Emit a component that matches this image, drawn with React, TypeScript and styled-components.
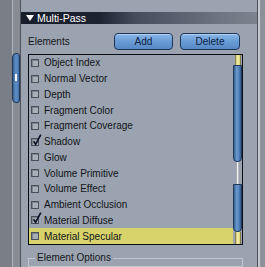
import React from 'react';
import styled, { createGlobalStyle } from 'styled-components';

const GlobalStyle = createGlobalStyle`
  html, body {
    margin: 0;
    padding: 0;
  }
  body {
    width: 265px;
    height: 267px;
    overflow: hidden;
    background: #9ba3b0;
    font-family: "Liberation Sans", Arial, sans-serif;
  }
`;

const Frame = styled.div`
  display: flex;
  width: 265px;
  height: 267px;
  overflow: hidden;
`;

const SideStrip = styled.div`
  position: relative;
  display: flex;
  flex: 0 0 auto;
  border-right: 1px solid #4f535b;
`;

const EdgeStrip = styled.div`
  display: flex;
  flex: 0 0 auto;
  border-left: 1px solid #4b4f57;
`;

const Face = styled.div<{ $w: number; $c: string }>`
  width: ${p => p.$w}px;
  background: ${p => p.$c};
`;

const TabHandle = styled.div`
  position: absolute;
  left: 12px;
  top: 53px;
  width: 8px;
  height: 50px;
  box-sizing: border-box;
  border: 1px solid #1f3656;
  border-radius: 4px 3px 3px 4px;
  background: linear-gradient(to right, #3b6497, #5f8fc6 50%, #4272a8);
  display: flex;
  justify-content: center;
  padding-top: 20px;
`;

const TabMark = styled.div`
  width: 2px;
  height: 7px;
  background: #f4f6fa;
`;

const Panel = styled.div`
  flex: 1;
  display: flex;
  flex-direction: column;
  padding-top: 12px;
  background: #9ba3b0;
`;

const Header = styled.div`
  height: 15px;
  display: flex;
  align-items: center;
  gap: 3px;
  padding-left: 5px;
  background: linear-gradient(
    to right,
    #181d2b 0%,
    #1d2231 33%,
    #454b5b 48%,
    #6f7582 85%,
    #7d838e 100%
  );
  color: #ffffff;
  font-size: 10.5px;
`;

const Caret = styled.svg`
  width: 8px;
  height: 6px;
  flex: 0 0 auto;
`;

const Toolbar = styled.div`
  display: flex;
  align-items: center;
  height: 17px;
  margin-top: 9px;
  padding: 0 17px 0 7px;
  gap: 7px;
`;

const Label = styled.span`
  flex: 1;
  font-size: 10px;
  color: #14161c;
`;

const Button = styled.button<{ $w: number }>`
  width: ${p => p.$w}px;
  height: 17px;
  padding: 0;
  box-sizing: border-box;
  border: 1px solid #1d3658;
  border-radius: 4px;
  background: linear-gradient(to bottom, #8ab6e6 0%, #6b9ed8 45%, #5788c4 100%);
  box-shadow: inset 0 1px 0 rgba(255, 255, 255, 0.35);
  font-family: "Liberation Sans", Arial, sans-serif;
  font-size: 10px;
  color: #0f2140;
`;

const ListBox = styled.div`
  display: flex;
  height: 191px;
  margin: 4px 14px 0 7px;
  box-sizing: border-box;
  border: 1px solid #0b0d12;
`;

const Rows = styled.div`
  flex: 1;
  display: flex;
  flex-direction: column;
`;

const Row = styled.div<{ $selected?: boolean }>`
  display: flex;
  align-items: center;
  gap: 5px;
  height: 15.75px;
  padding-left: 2px;
  background: ${p => (p.$selected ? '#d8d36b' : 'transparent')};
  font-size: 10px;
  color: #111318;
  white-space: nowrap;
`;

const Box = styled.span`
  position: relative;
  width: 8px;
  height: 8px;
  box-sizing: border-box;
  flex: 0 0 auto;
  border: 1px solid #4a505a;
  background: #a8afb9;
  box-shadow: inset 1px 1px 0 #7d848e;
`;

const Tick = styled.svg`
  position: absolute;
  left: 0;
  top: -5px;
  width: 10px;
  height: 12px;
  overflow: visible;
`;

const Scroller = styled.div`
  width: 9px;
  display: flex;
  flex-direction: column;
  align-items: center;
`;

const Cap = styled.div<{ $h: number }>`
  width: 6px;
  height: ${p => p.$h}px;
  box-sizing: border-box;
  border-left: 1px solid #8a8450;
  border-right: 1px solid #7e7a4a;
  background: linear-gradient(to right, #c9c070, #f5f1b0 45%, #d8cf6a);
`;

const Thumb = styled.div<{ $h: number }>`
  width: 9px;
  height: ${p => p.$h}px;
  box-sizing: border-box;
  border: 1px solid #1f395c;
  border-radius: 0 0 4px 4px;
  background: linear-gradient(to right, #36608f, #6b9bd1 40%, #5283bd 70%, #335a88);
`;

const Track = styled.div<{ $h: number }>`
  width: 3px;
  height: ${p => p.$h}px;
  background: linear-gradient(to right, #80868e, #f3f3f3 50%, #9aa0a8);
`;

const OptionsGroup = styled.fieldset`
  margin: 7px 14px 0 7px;
  padding: 0 0 0 6px;
  height: 30px;
  border: 1px solid #c2c7ce;
`;

const Legend = styled.legend`
  padding: 0 2px;
  font-size: 10px;
  line-height: 12px;
  color: #14161c;
`;

const elements = [
  { name: 'Object Index' },
  { name: 'Normal Vector' },
  { name: 'Depth' },
  { name: 'Fragment Color' },
  { name: 'Fragment Coverage' },
  { name: 'Shadow', checked: true },
  { name: 'Glow' },
  { name: 'Volume Primitive' },
  { name: 'Volume Effect' },
  { name: 'Ambient Occlusion' },
  { name: 'Material Diffuse', checked: true },
  { name: 'Material Specular', selected: true },
];

const CheckBox: React.FC<{ checked?: boolean }> = ({ checked }) => (
  <Box>
    {checked && (
      <Tick viewBox="0 0 10 12">
        <path d="M1.6 7.2 L3.6 10.4 L8.8 0.6" fill="none" stroke="#0c1428" strokeWidth="1.7" />
      </Tick>
    )}
  </Box>
);

const App: React.FC = () => (
  <>
    <GlobalStyle />
    <Frame>
      <SideStrip>
        <Face $w={12} $c="#7a7e86" />
        <Face $w={1} $c="#b4b8be" />
        <Face $w={7} $c="#878b93" />
        <TabHandle>
          <TabMark />
        </TabHandle>
      </SideStrip>
      <Panel>
        <Header>
          <Caret viewBox="0 0 8 6">
            <path d="M0 0 H8 L4 6 Z" fill="#ffffff" />
          </Caret>
          Multi-Pass
        </Header>
        <Toolbar>
          <Label>Elements</Label>
          <Button $w={59}>Add</Button>
          <Button $w={60}>Delete</Button>
        </Toolbar>
        <ListBox>
          <Rows>
            {elements.map(el => (
              <Row key={el.name} $selected={el.selected}>
                <CheckBox checked={el.checked} />
                {el.name}
              </Row>
            ))}
          </Rows>
          <Scroller>
            <Cap $h={10} />
            <Thumb $h={97} />
            <Track $h={22} />
            <Thumb $h={48} />
            <Cap $h={12} />
          </Scroller>
        </ListBox>
        <OptionsGroup>
          <Legend>Element Options</Legend>
        </OptionsGroup>
      </Panel>
      <EdgeStrip>
        <Face $w={2} $c="#c6cad0" />
        <Face $w={5} $c="#8d929a" />
      </EdgeStrip>
    </Frame>
  </>
);

export default App;
